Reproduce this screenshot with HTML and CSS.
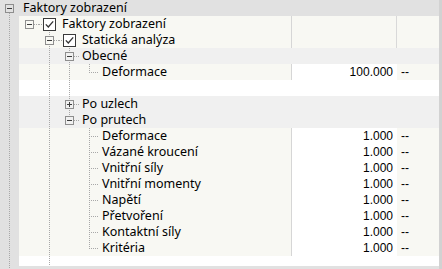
FILE: index.html
```html
<!DOCTYPE html>
<html lang="cs">
<head>
    <meta charset="UTF-8">
    <title>Faktory zobrazení</title>
    <link rel="stylesheet" href="styles.css">
</head>
<body>
    <div class="grid">
        <div class="row top">
            <span class="gutter"><span class="exp"></span></span>
            <span class="label">Faktory zobrazení</span>
        </div>

        <div class="row cat">
            <span class="gutter"></span>
            <span class="tree">
                <span class="g x"><span class="exp"></span></span>
                <span class="g ck"><svg width="13" height="13" viewBox="0 0 13 13"><rect x="0.5" y="0.5" width="12" height="12" fill="#fff" stroke="#3a3a3a"/><path d="M2.8 6.4 L5.3 9 L10.2 3.4" fill="none" stroke="#333" stroke-width="1.3"/></svg></span>
                <span class="label">Faktory zobrazení</span>
            </span>
            <span class="val"></span><span class="unit"></span>
        </div>

        <div class="row cat">
            <span class="gutter"></span>
            <span class="tree">
                <span class="g"></span>
                <span class="g x through"><span class="exp"></span></span>
                <span class="g ck"><svg width="13" height="13" viewBox="0 0 13 13"><rect x="0.5" y="0.5" width="12" height="12" fill="#fff" stroke="#3a3a3a"/><path d="M2.8 6.4 L5.3 9 L10.2 3.4" fill="none" stroke="#333" stroke-width="1.3"/></svg></span>
                <span class="label">Statická analýza</span>
            </span>
            <span class="val"></span><span class="unit"></span>
        </div>

        <div class="row grp">
            <span class="gutter"></span>
            <span class="tree">
                <span class="g"></span>
                <span class="g v"></span>
                <span class="g x through"><span class="exp"></span></span>
                <span class="label">Obecné</span>
            </span>
            <span class="val"></span><span class="unit"></span>
        </div>

        <div class="row item">
            <span class="gutter"></span>
            <span class="tree">
                <span class="g"></span>
                <span class="g v"></span>
                <span class="g v"></span>
                <span class="g l"></span>
                <span class="label">Deformace</span>
            </span>
            <span class="val">100.000</span><span class="unit">--</span>
        </div>

        <div class="row blank">
            <span class="gutter"></span>
            <span class="tree">
                <span class="g"></span>
                <span class="g v"></span>
                <span class="g v"></span>
            </span>
            <span class="val"></span><span class="unit"></span>
        </div>

        <div class="row grp">
            <span class="gutter"></span>
            <span class="tree">
                <span class="g"></span>
                <span class="g v"></span>
                <span class="g x through"><span class="exp plus"></span></span>
                <span class="label">Po uzlech</span>
            </span>
            <span class="val"></span><span class="unit"></span>
        </div>

        <div class="row grp">
            <span class="gutter"></span>
            <span class="tree">
                <span class="g"></span>
                <span class="g v"></span>
                <span class="g x up"><span class="exp"></span></span>
                <span class="label">Po prutech</span>
            </span>
            <span class="val"></span><span class="unit"></span>
        </div>

        <div class="row item">
            <span class="gutter"></span>
            <span class="tree"><span class="g"></span><span class="g v"></span><span class="g"></span><span class="g t"></span><span class="label">Deformace</span></span>
            <span class="val">1.000</span><span class="unit">--</span>
        </div>
        <div class="row item">
            <span class="gutter"></span>
            <span class="tree"><span class="g"></span><span class="g v"></span><span class="g"></span><span class="g t"></span><span class="label">Vázané kroucení</span></span>
            <span class="val">1.000</span><span class="unit">--</span>
        </div>
        <div class="row item">
            <span class="gutter"></span>
            <span class="tree"><span class="g"></span><span class="g v"></span><span class="g"></span><span class="g t"></span><span class="label">Vnitřní síly</span></span>
            <span class="val">1.000</span><span class="unit">--</span>
        </div>
        <div class="row item">
            <span class="gutter"></span>
            <span class="tree"><span class="g"></span><span class="g v"></span><span class="g"></span><span class="g t"></span><span class="label">Vnitřní momenty</span></span>
            <span class="val">1.000</span><span class="unit">--</span>
        </div>
        <div class="row item">
            <span class="gutter"></span>
            <span class="tree"><span class="g"></span><span class="g v"></span><span class="g"></span><span class="g t"></span><span class="label">Napětí</span></span>
            <span class="val">1.000</span><span class="unit">--</span>
        </div>
        <div class="row item">
            <span class="gutter"></span>
            <span class="tree"><span class="g"></span><span class="g v"></span><span class="g"></span><span class="g t"></span><span class="label">Přetvoření</span></span>
            <span class="val">1.000</span><span class="unit">--</span>
        </div>
        <div class="row item">
            <span class="gutter"></span>
            <span class="tree"><span class="g"></span><span class="g v"></span><span class="g"></span><span class="g t"></span><span class="label">Kontaktní síly</span></span>
            <span class="val">1.000</span><span class="unit">--</span>
        </div>
        <div class="row item">
            <span class="gutter"></span>
            <span class="tree"><span class="g"></span><span class="g v"></span><span class="g"></span><span class="g l"></span><span class="label">Kritéria</span></span>
            <span class="val">1.000</span><span class="unit">--</span>
        </div>

        <div class="row fill">
            <span class="gutter"></span>
            <span class="tree wide"><span class="g"></span><span class="g v"></span></span>
        </div>
    </div>
</body>
</html>
```

FILE: styles.css
```css
:root {
    --dot: repeating-linear-gradient(to bottom, #a8a8a8 0 1px, transparent 1px 2px);
    --doth: repeating-linear-gradient(to right, #a8a8a8 0 1px, transparent 1px 2px);
}

body {
    margin: 0;
    font-family: "Noto Sans", sans-serif;
    font-size: 12.5px;
    color: #000;
}

.grid {
    width: 442px;
    height: 269px;
    box-sizing: border-box;
    display: flex;
    flex-direction: column;
    padding-bottom: 3px;
    border-right: 3px solid #d2d2d2;
    background: var(--dot) 9px 13px / 1px 100% no-repeat, #e1e1e1; /* gutter line */
}

.row {
    display: flex;
    height: 16px;
    line-height: 16px;
    flex-shrink: 0;
    --bg: #f8f8f3;
    --vbg: #f8f8f3;
    --ubg: #f8f8f3;
    --l1: #d6d6d6;
    --l2: #d9d9d9;
}

.row.top {
    --bg: #e1e1e1;
}

.row.grp {
    --bg: #f0f0f0;
    --vbg: #f0f0f0;
    --ubg: #f0f0f0;
    --l1: #f0f0f0;
    --l2: #f0f0f0;
}

.row.item {
    --vbg: #fff;
    --l2: #fff;
}

.row.blank,
.row.fill {
    --bg: #fff;
    --vbg: #fff;
    --ubg: #fff;
    --l1: #fff;
    --l2: #fff;
}

.row.fill {
    flex: 1;
}

.gutter {
    width: 19px;
    flex-shrink: 0;
    display: flex;
}

.gutter .exp {
    margin-left: 5px;
}

.row.top .label {
    margin-left: 4px;
}

.tree {
    width: 272px;
    flex-shrink: 0;
    display: flex;
    background: var(--bg);
}

.tree.wide {
    flex: 1;
}

.label {
    margin-left: 3px;
    white-space: nowrap;
}

.val {
    width: 105px;
    box-sizing: border-box;
    border-left: 1px solid var(--l1);
    background: var(--vbg);
    text-align: right;
    padding-right: 3px;
    font-family: "Liberation Sans", sans-serif;
    font-size: 12px;
}

.unit {
    flex: 1;
    border-left: 1px solid var(--l2);
    background: var(--ubg);
    padding-left: 4px;
    font-family: "Liberation Sans", sans-serif;
    font-size: 12px;
}

/* tree guide slots, 20px per level */
.g {
    width: 20px;
    flex-shrink: 0;
    display: flex;
    align-items: flex-start;
}

.g.v {
    background: var(--dot) 10px 0 / 1px 100% no-repeat;
}

.g.t {
    background: var(--dot) 10px 0 / 1px 16px no-repeat, var(--doth) 12px 8px / 8px 1px no-repeat;
}

.g.l {
    background: var(--dot) 10px 0 / 1px 9px no-repeat, var(--doth) 12px 8px / 8px 1px no-repeat;
}

.g.x {
    background: var(--doth) 15px 8px / 5px 1px no-repeat;
}

.g.x.through {
    background: var(--doth) 15px 8px / 5px 1px no-repeat, var(--dot) 10px 0 / 1px 16px no-repeat;
}

.g.x.up {
    background: var(--doth) 15px 8px / 5px 1px no-repeat, var(--dot) 10px 0 / 1px 4px no-repeat;
}

.g.ck {
    background: var(--doth) 0 8px / 3px 1px no-repeat;
}

.g.ck svg {
    margin: 2px 0 0 4px;
    display: block;
}

.exp {
    width: 9px;
    height: 9px;
    box-sizing: border-box;
    margin: 4px 0 0 6px;
    border: 1px solid #8e8e8e;
    background: linear-gradient(#3c3c3c, #3c3c3c) center / 5px 1px no-repeat, var(--bg);
}

.exp.plus {
    background: linear-gradient(#3c3c3c, #3c3c3c) center / 5px 1px no-repeat,
        linear-gradient(#3c3c3c, #3c3c3c) center / 1px 5px no-repeat, var(--bg);
}
```
